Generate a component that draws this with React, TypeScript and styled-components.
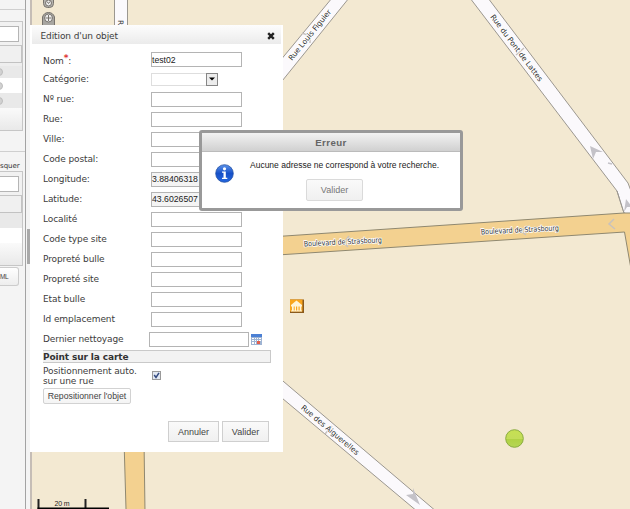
import React from "react";
import styled, { createGlobalStyle } from "styled-components";

const verdana = `"DejaVu Sans", Verdana, sans-serif`;
const arial = `"Liberation Sans", Arial, sans-serif`;

const GlobalStyle = createGlobalStyle`
  * { box-sizing: border-box; }
  body { margin: 0; font-family: ${verdana}; color: #4c4c4c; overflow: hidden; }
`;

const Page = styled.div`
  position: relative;
  display: flex;
  width: 630px;
  height: 509px;
  overflow: hidden;
  background: #fff;
`;

/* ---------- Left panel ---------- */

const Sidebar = styled.aside`
  display: flex;
  flex-direction: column;
  flex: none;
  width: 26px;
  height: 509px;
  background: #f4f4f4;
  border-right: 1px solid #a3a3a3;
  overflow: hidden;
`;

const Strip = styled.div<{ $h: number; $line?: string }>`
  flex: none;
  height: ${(p) => p.$h}px;
  border-bottom: 1px solid ${(p) => p.$line ?? "transparent"};
`;

const Panel = styled.div<{ $h: number }>`
  flex: none;
  display: flex;
  flex-direction: column;
  width: 23px;
  height: ${(p) => p.$h}px;
  border: solid #c6c6c6;
  border-width: 1px 1px 1px 0;
  background: #f1f1f1;
`;

const SearchBar = styled.div`
  flex: none;
  height: 24px;
  padding-top: 4px;
  border-bottom: 1px solid #c4c4c4;
`;

const SearchInput = styled.div`
  width: 19px;
  height: 16px;
  background: #fff;
  border: solid #b5b5b5;
  border-width: 1px 1px 1px 0;
`;

const ListHead = styled.div`
  flex: none;
  height: 17px;
  width: 22px;
  background: #f0f0f0;
  border: solid #c2c2c2;
  border-width: 0 1px 1px 0;
`;

const ListRow = styled.div<{ $h: number; $bg: string }>`
  flex: none;
  display: flex;
  align-items: center;
  height: ${(p) => p.$h}px;
  background: ${(p) => p.$bg};
`;

const ListFoot = styled.div`
  flex: 1;
  background: linear-gradient(#fafafa, #e9e9e9);
`;

const Dot = styled.span`
  width: 8px;
  height: 8px;
  margin-left: -5px;
  border-radius: 50%;
  background: #d2d2d2;
  border: 1px solid #bdbdbd;
`;

const SideText = styled.div`
  flex: none;
  height: 18px;
  width: 20px;
  display: flex;
  align-items: center;
  padding-top: 8px;
  font-size: 7px;
  line-height: 9px;
  color: #333;
`;

const SideButton = styled.div`
  flex: none;
  display: flex;
  align-items: center;
  width: 19px;
  height: 19px;
  margin-top: 1px;
  font: 6.5px ${arial};
  letter-spacing: -0.4px;
  color: #444;
  background: linear-gradient(#fff, #ededed);
  border: solid #ccc;
  border-width: 1px 1px 1px 0;
  border-radius: 0 3px 3px 0;
`;

const Splitter = styled.div`
  flex: none;
  width: 4px;
  padding-top: 229px;
  background: #f4f4f4;
`;

const SplitterGrip = styled.div`
  width: 3px;
  height: 35px;
  margin-left: 1px;
  background: #a9a9a9;
`;

/* ---------- Map ---------- */

const MapArea = styled.main`
  position: relative;
  flex: none;
  width: 600px;
  height: 509px;
  border-left: 2px solid #c5bdb6;
  background: #f3e9d2;
`;

const MapDrawing = styled.svg`
  display: block;
`;

/* ---------- Edit dialog ---------- */

const EditDialog = styled.section`
  position: absolute;
  left: 30px;
  top: 25px;
  width: 253px;
  height: 427px;
  background: #fff;
`;

const EditHeader = styled.header`
  display: flex;
  align-items: center;
  justify-content: space-between;
  height: 19px;
  margin: 0 2px;
  padding: 2px 6px 0 8.5px;
  background: linear-gradient(#fdfdfd, #ebebeb);
  font-size: 9px;
  letter-spacing: -0.1px;
  color: #3c3c3c;
`;

const Form = styled.div`
  padding: 6px 12px 0 13px;
`;

const Row = styled.div<{ $h?: number }>`
  display: flex;
  align-items: center;
  height: ${(p) => p.$h ?? 20}px;
`;

const Label = styled.label<{ $tall?: boolean; $drop?: number }>`
  width: 108px;
  flex: none;
  padding-top: ${(p) => p.$drop ?? 0}px;
  font-size: 9px;
  letter-spacing: -0.1px;
  color: #3c3c3c;
  line-height: ${(p) => (p.$tall ? 10 : 13)}px;
  white-space: pre;
`;

const Star = styled.sup`
  color: #d33;
  font-size: 9px;
  font-weight: bold;
  line-height: 0;
  vertical-align: 3px;
`;

const Field = styled.input<{ $readonly?: boolean }>`
  width: 91px;
  height: 15px;
  padding: 0;
  border: 1px solid #b4b4b4;
  border-radius: 0;
  outline: none;
  font: 8.7px ${arial};
  color: #222;
  background: ${(p) => (p.$readonly ? "#f4f4f4" : "#fff")};
`;

const DateField = styled(Field)`
  width: 100px;
  margin-left: -2px;
`;

const SelectBox = styled.div`
  display: flex;
  justify-content: flex-end;
  width: 67px;
  height: 13px;
  background: #fff;
  border: 1px solid #dedede;
`;

const SelectArrow = styled.span`
  display: flex;
  align-items: center;
  justify-content: center;
  width: 12px;
  height: 13px;
  margin: -1px;
  background: #ececec;
  border: 1px solid #868686;
`;

const CalendarIcon = styled.svg`
  margin-left: 2px;
`;

const SectionTitle = styled.h2`
  width: 228px;
  height: 13px;
  margin: 1px 0 0;
  padding-bottom: 1px;
  font-size: 9px;
  letter-spacing: -0.12px;
  line-height: 12px;
  color: #333;
  background: #f2f2f2;
  border: solid #c9c9c9;
  border-width: 1px 1px 1px 0;
`;

const CheckBox = styled.span`
  display: flex;
  width: 9px;
  height: 9px;
  margin-left: 1px;
  background: #e3e9f2;
  border: 1px solid #9a9a9a;
`;

const SmallButton = styled.button`
  display: block;
  width: 88px;
  height: 16px;
  padding: 0;
  white-space: nowrap;
  font: 8.7px ${arial};
  color: #444;
  background: linear-gradient(#fff, #f4f4f4);
  border: 1px solid #d2d2d2;
  border-radius: 2px;
`;

const Footer = styled.footer`
  display: flex;
  justify-content: flex-end;
  gap: 3px;
  margin-top: 17px;
  padding-right: 2px;
`;

const Button = styled.button<{ $w: number; $soft?: boolean }>`
  width: ${(p) => p.$w}px;
  height: ${(p) => (p.$soft ? 22 : 21)}px;
  padding: 0;
  font: 9px ${arial};
  color: ${(p) => (p.$soft ? "#777" : "#444")};
  background: linear-gradient(#fafafa, #f0f0f0);
  border: 1px solid ${(p) => (p.$soft ? "#dadada" : "#cfcfcf")};
  border-radius: ${(p) => (p.$soft ? 2 : 0)}px;
`;

/* ---------- Error dialog ---------- */

const ErrorDialog = styled.section`
  position: absolute;
  left: 199px;
  top: 130px;
  width: 264px;
  height: 81px;
  background: #fff;
  border: 3px solid #999;
  border-radius: 3px;
`;

const ErrorTitle = styled.header`
  display: flex;
  align-items: center;
  justify-content: center;
  height: 19px;
  padding-top: 1px;
  font: bold 9.7px ${arial};
  letter-spacing: 0.4px;
  color: #666;
  background: linear-gradient(#f2f2f2, #d0d0d0);
  border-bottom: 1px solid #bbb;
`;

const ErrorBody = styled.div`
  display: grid;
  grid-template-columns: 43px 1fr;
  height: 56px;
`;

const InfoIcon = styled.svg`
  margin: 12px 0 0 13px;
`;

const ErrorContent = styled.div`
  display: flex;
  flex-direction: column;
  padding: 7px 0 0;
`;

const Message = styled.p`
  margin: 0 0 7px 5px;
  white-space: nowrap;
  font: 8.5px/12px ${arial};
  color: #222;
`;

const ErrorAction = styled.div`
  width: 100%;
  padding-left: 61px;
`;

type RowData = { label: string; value?: string; locked?: boolean };

const rows: RowData[] = [
  { label: "Nº rue:" },
  { label: "Rue:" },
  { label: "Ville:" },
  { label: "Code postal:" },
  { label: "Longitude:", value: "3.88406318", locked: true },
  { label: "Latitude:", value: "43.6026507", locked: true },
  { label: "Localité" },
  { label: "Code type site" },
  { label: "Propreté bulle" },
  { label: "Propreté site" },
  { label: "Etat bulle" },
  { label: "Id emplacement" },
];

function StreetMap() {
  const street = { fill: "#fbf9fc", stroke: "#9b9790", strokeWidth: 1 };
  const avenue = { fill: "#f3d190", stroke: "#8f8870", strokeWidth: 1 };
  const chevron = { fill: "#c4c2c8" };
  const name = {
    fontFamily: `"DejaVu Sans", sans-serif`,
    fontSize: 7.5,
    fill: "#333",
    stroke: "#fff",
    strokeWidth: 1.6,
    paintOrder: "stroke",
    lengthAdjust: "spacingAndGlyphs" as const,
  };
  return (
    <MapDrawing width="598" height="509" viewBox="32 0 598 509">
      <path d="M114.500-2V30H127.500V-2Z" {...street} />
      <text {...name} transform="translate(118 20) rotate(90)">R</text>
      <path d="M124 440L126 509V512H145L144 440Z" {...avenue} />
      <path d="M270 73L332-2H349L270 96Z" {...street} />
      <path d="M470-2H488L628 183L634 199V216L624 213L617 191Z" {...street} />
      <path d="M270 370L437 512H418L270 388Z" {...street} />
      <path d="M270 237L624 213H640V320L624.500 232L270 255.500Z" {...avenue} />
      <path d="M624 212L634 211V196L626 190L620 198Z" fill="#fbf9fc" />
      <path d="M617 191L624 213" stroke="#9b9790" />
      <path d="M590 146L603 152L596 152L593 159Z M626 199L632 207L627 207L624 212Z M406 495L413 494L413 488L420 505Z" {...chevron} />
      <path d="M608 163L612 164" stroke="#c4c2c8" strokeWidth="1.500" />
      <path d="M614 219L609 224L615 229M529 226L521 231L526 235M349 236L344 243L348 247M302 33L310 36V43M516 55L524 48M325 434L332 426" fill="none" stroke="#c8c2bd" strokeWidth="1.500" />
      <text {...name} textLength="63" transform="translate(292 61) rotate(-51)">Rue Louis Figuier</text>
      <text {...name} textLength="81.500" transform="translate(490 17) rotate(53)">Rue du Pont de Lattes</text>
      <text {...name} textLength="78" transform="translate(304 246.500) rotate(-3)">Boulevard de Strasbourg</text>
      <text {...name} textLength="78" transform="translate(481 234.500) rotate(-3)">Boulevard de Strasbourg</text>
      <text {...name} textLength="73" transform="translate(300.500 408.500) rotate(40)">Rue des Aiguerelles</text>

      <g stroke="#77736d">
        <rect x="43.500" y="-4.500" width="10" height="12" rx="4" fill="#b5b3ae" />
        <circle cx="48.500" cy="3" r="3" fill="#ededed" />
        <path d="M47 1.500L48.500 3.500L50 1.500" fill="none" />
        <path d="M42.500 28V17Q44 12.500 48.500 12.500T54.500 17V28Z" fill="#a8a6a1" />
        <circle cx="48.500" cy="18" r="4" fill="#eee" />
        <path d="M45.500 18H51.500M48.500 15V21" />
      </g>

      <rect x="290" y="299.500" width="14" height="13.500" fill="#8a5a1c" />
      <rect x="290" y="299.500" width="12.500" height="12" fill="#f9a51c" />
      <path d="M291 305L296.500 300.500L302 305V306.500H291ZM292 306H293.700V311H292ZM294.700 306H296V311H294.700ZM297.200 306H298.500V311H297.200ZM299.700 306H301.300V311H299.700ZM291 310.500H302V311.500H291Z" fill="#fff4d6" />

      <defs>
        <linearGradient id="marker" x2="0" y2="1">
          <stop stopColor="#c6e052" />
          <stop offset=".5" stopColor="#c3dd59" />
          <stop offset=".55" stopColor="#b0d244" />
          <stop offset="1" stopColor="#b5d655" />
        </linearGradient>
      </defs>
      <circle cx="514.500" cy="438.500" r="8.800" fill="url(#marker)" stroke="#8aac3f" />

      <path d="M38.500 499V509M85.500 499V509" stroke="#222" strokeWidth="2" />
      <path d="M37.500 508.500H109" stroke="#000" strokeWidth="2" />
      <text x="54.500" y="505.500" fontFamily={arial} fontSize="7" fill="#222" textLength="15">20 m</text>
    </MapDrawing>
  );
}

export default function App() {
  return (
    <>
      <GlobalStyle />
      <Page>
        <Sidebar>
          <Strip $h={10} $line="#cfcfcf" />
          <Strip $h={11} />
          <Panel $h={110}>
            <SearchBar><SearchInput /></SearchBar>
            <ListHead />
            <ListRow $h={3} $bg="#eeeeee" />
            <ListRow $h={12} $bg="#e9e9e9"><Dot /></ListRow>
            <ListRow $h={15} $bg="#ffffff"><Dot /></ListRow>
            <ListRow $h={15} $bg="#e9e9e9"><Dot /></ListRow>
            <ListFoot />
          </Panel>
          <Strip $h={5} />
          <Strip $h={16} $line="#cfcfcf" />
          <Strip $h={1} />
          <SideText>squer</SideText>
          <Panel $h={95}>
            <SearchBar><SearchInput /></SearchBar>
            <ListHead />
            <ListRow $h={15} $bg="#e9e9e9" />
            <ListRow $h={15} $bg="#ffffff" />
            <ListFoot />
          </Panel>
          <SideButton>ML</SideButton>
        </Sidebar>
        <Splitter><SplitterGrip /></Splitter>
        <MapArea><StreetMap /></MapArea>

        <EditDialog>
          <EditHeader>
            <span>Edition d'un objet</span>
            <svg width="8" height="8" viewBox="0 0 8 8">
              <path d="M1.200 1.200L6.800 6.800M6.800 1.200L1.200 6.800" stroke="#222" strokeWidth="2.400" />
            </svg>
          </EditHeader>
          <Form>
            <Row $h={19}>
              <Label $drop={3}>Nom<Star>*</Star>:</Label>
              <Field defaultValue="test02" />
            </Row>
            <Row>
              <Label $drop={1}>Catégorie:</Label>
              <SelectBox>
                <SelectArrow>
                  <svg width="6" height="4" viewBox="0 0 6 4"><path d="M0 .5H6L3 3.500Z" fill="#000" /></svg>
                </SelectArrow>
              </SelectBox>
            </Row>
            {rows.map((r) => (
              <Row key={r.label}>
                <Label>{r.label}</Label>
                <Field defaultValue={r.value} $readonly={r.locked} />
              </Row>
            ))}
            <Row>
              <Label>Dernier nettoyage</Label>
              <DateField />
              <CalendarIcon width="11" height="11" viewBox="0 0 11 11">
                <rect width="11" height="11" fill="#9fb4d3" />
                <rect width="11" height="3" fill="#4b80d4" />
                <path d="M1 4H3V5H1ZM4 4H5V5H4ZM6 4H7V5H6ZM8 4H10V5H8ZM1 6H3V7H1ZM4 6H5V7H4ZM6 6H7V7H6ZM8 6H10V7H8ZM1 8H3V10H1ZM4 8H5V10H4Z" fill="#fff" />
                <rect x="6" y="7" width="3" height="3" fill="#e2604d" />
              </CalendarIcon>
            </Row>
            <SectionTitle>Point sur la carte</SectionTitle>
            <Row $h={25}>
              <Label $tall>{"Positionnement auto.\nsur une rue"}</Label>
              <CheckBox>
                <svg width="7" height="7" viewBox="0 0 7 7"><path d="M1.200 3L3 5.500L6 .8" fill="none" stroke="#334a80" strokeWidth="1.500" /></svg>
              </CheckBox>
            </Row>
            <SmallButton>Repositionner l'objet</SmallButton>
            <Footer>
              <Button $w={51}>Annuler</Button>
              <Button $w={47}>Valider</Button>
            </Footer>
          </Form>
        </EditDialog>

        <ErrorDialog>
          <ErrorTitle>Erreur</ErrorTitle>
          <ErrorBody>
            <InfoIcon width="19" height="19" viewBox="0 0 19 19">
              <defs>
                <linearGradient id="info" x2="0" y2="1">
                  <stop stopColor="#5c93ea" />
                  <stop offset=".5" stopColor="#1650c8" />
                  <stop offset="1" stopColor="#2467e0" />
                </linearGradient>
              </defs>
              <circle cx="9.500" cy="9.500" r="8.800" fill="url(#info)" stroke="#2351a5" strokeWidth=".8" />
              <circle cx="9.500" cy="4.800" r="1.600" fill="#fff" />
              <path d="M7 7.500H10.800V13.700H12.300V15H7V13.700H8.500V8.800H7Z" fill="#fff" />
            </InfoIcon>
            <ErrorContent>
              <Message>Aucune adresse ne correspond à votre recherche.</Message>
              <ErrorAction><Button $w={57} $soft>Valider</Button></ErrorAction>
            </ErrorContent>
          </ErrorBody>
        </ErrorDialog>
      </Page>
    </>
  );
}
